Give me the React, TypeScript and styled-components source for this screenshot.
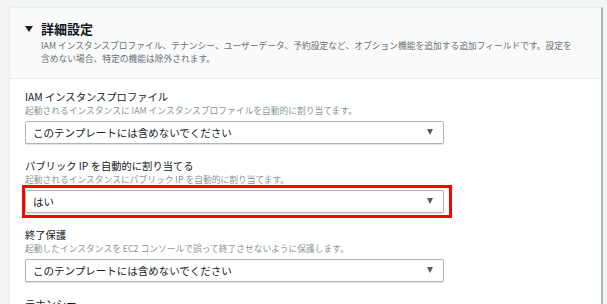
import styled, { createGlobalStyle } from 'styled-components';

const GlobalStyle = createGlobalStyle`
    html, body {
        margin: 0;
        padding: 0;
        background: #f2f3f3;
        overflow: hidden;
    }
    body {
        font-family: 'Noto Sans CJK JP', 'Noto Sans', sans-serif;
        color: #16191f;
    }
`;

const Page = styled.div`
    padding: 7px 4px 0 9px;
    height: 304px;
    box-sizing: border-box;
`;

const Panel = styled.section`
    background: #ffffff;
    border: 1px solid #eaeded;
    border-right: 2px solid #aab7b8;
    border-bottom: none;
    height: 100%;
    box-sizing: border-box;
`;

const Header = styled.div`
    background: #fafafa;
    border-bottom: 1px solid #eaeded;
    padding: 12px 16px 13px 15px;
`;

const TitleRow = styled.div`
    display: flex;
    align-items: center;
    gap: 8px;
    height: 18px;
`;

const Caret = styled.span`
    width: 0;
    height: 0;
    border-left: 4px solid transparent;
    border-right: 4px solid transparent;
    border-top: 6px solid #16191f;
`;

const Title = styled.h2`
    margin: 0;
    font-size: 13px;
    font-weight: 700;
    line-height: 18px;
`;

const HeaderText = styled.p`
    margin: 0.5px 0 0 16px;
    font-size: 8.75px;
    line-height: 13px;
    color: #687078;
`;

const Body = styled.div`
    padding: 11px 15px 0 15px;
    display: flex;
    flex-direction: column;
    gap: 15px;
`;

const Field = styled.div`
    display: flex;
    flex-direction: column;
`;

const Label = styled.div`
    font-size: 10.3px;
    line-height: 14px;
    color: #16191f;
`;

const Hint = styled.div`
    font-size: 8.75px;
    line-height: 13px;
    color: #879596;
    margin-bottom: 4px;
`;

const SelectWrap = styled.div`
    position: relative;
    width: 419px;
`;

const Select = styled.div`
    height: 23px;
    box-sizing: border-box;
    border: 1px solid #aab7b8;
    border-radius: 2px;
    box-shadow: 0 1px 1px rgba(0, 0, 0, 0.12);
    background: #ffffff;
    display: flex;
    align-items: center;
    justify-content: space-between;
    padding: 0 10px 0 7px;
    font-size: 10.5px;
    color: #16191f;
`;

const Arrow = styled.span`
    width: 0;
    height: 0;
    border-left: 3.5px solid transparent;
    border-right: 3.5px solid transparent;
    border-top: 6px solid #545b64;
`;

const Highlight = styled.div`
    position: absolute;
    left: -3px;
    top: -5px;
    right: -8px;
    bottom: -5px;
    border: 3px solid #f00;
    pointer-events: none;
`;

interface IField {
    label: string;
    hint?: string;
    value?: string;
    highlighted?: boolean;
}

const fields: IField[] = [
    {
        label: 'IAM インスタンスプロファイル',
        hint: '起動されるインスタンスに IAM インスタンスプロファイルを自動的に割り当てます。',
        value: 'このテンプレートには含めないでください',
    },
    {
        label: 'パブリック IP を自動的に割り当てる',
        hint: '起動されるインスタンスにパブリック IP を自動的に割り当てます。',
        value: 'はい',
        highlighted: true,
    },
    {
        label: '終了保護',
        hint: '起動したインスタンスを EC2 コンソールで誤って終了させないように保護します。',
        value: 'このテンプレートには含めないでください',
    },
    {
        label: 'テナンシー',
    },
];

function FormField({ label, hint, value, highlighted }: IField) {
    return (
        <Field>
            <Label>{label}</Label>
            {hint && <Hint>{hint}</Hint>}
            {value && (
                <SelectWrap>
                    <Select>
                        <span>{value}</span>
                        <Arrow />
                    </Select>
                    {highlighted && <Highlight />}
                </SelectWrap>
            )}
        </Field>
    );
}

export default function App() {
    return (
        <>
            <GlobalStyle />
            <Page>
                <Panel>
                    <Header>
                        <TitleRow>
                            <Caret />
                            <Title>詳細設定</Title>
                        </TitleRow>
                        <HeaderText>
                            IAM インスタンスプロファイル、テナンシー、ユーザーデータ、予約設定など、オプション機能を追加する追加フィールドです。設定を
                            <br />
                            含めない場合、特定の機能は除外されます。
                        </HeaderText>
                    </Header>
                    <Body>
                        {fields.map((f) => (
                            <FormField key={f.label} {...f} />
                        ))}
                    </Body>
                </Panel>
            </Page>
        </>
    );
}
